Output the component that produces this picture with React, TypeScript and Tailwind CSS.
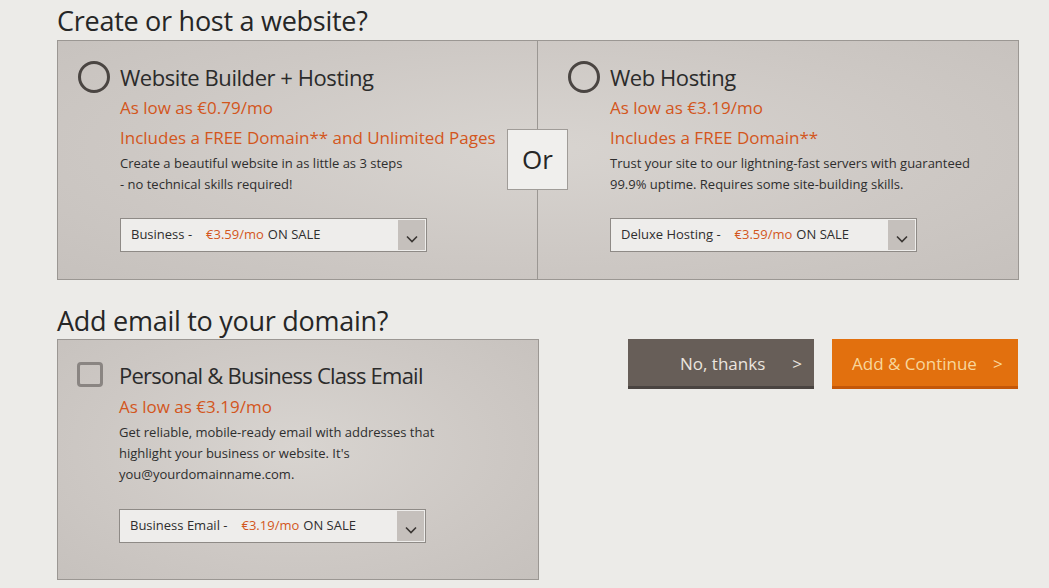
import React from 'react';

const font = { fontFamily: '"Open Sans", "Liberation Sans", sans-serif' };

const Radio: React.FC = () => (
  <div className="w-[32px] h-[32px] shrink-0 rounded-full border-[3px] border-[#4a4542]" />
);

const Checkbox: React.FC = () => (
  <div className="w-[26px] h-[25px] shrink-0 mt-[3px] mr-[16px] rounded-[4px] border-[3px] border-[#8a8582]" />
);

const Select: React.FC<{ label: string; price: string }> = ({ label, price }) => (
  <div className="w-[307px] h-[34px] flex items-stretch border border-[#8e8a86] bg-[#eeedeb]">
    <div className="flex-1 flex items-center pl-[10px] text-[13px] text-[#2e2e2e]">
      <span>{label} -</span>
      <span className="ml-[14px] text-[#d3561c]">{price}</span>
      <span className="ml-[4px]">ON SALE</span>
    </div>
    <div className="w-[27px] my-[1px] mr-[1px] bg-[#c5c0bc] flex items-end justify-center pb-[7px]">
      <svg width="12" height="8" viewBox="0 0 12 8" fill="none">
        <path d="M1 1.5 L6 6.5 L11 1.5" stroke="#3a3633" strokeWidth="1.6" />
      </svg>
    </div>
  </div>
);

const Option: React.FC<{
  title: string;
  price: string;
  includes: string;
  desc: string[];
  select: { label: string; price: string };
  pad: string;
}> = ({ title, price, includes, desc, select, pad }) => (
  <div className={`flex gap-[10px] ${pad} pt-[20px] pb-[27px]`}>
    <Radio />
    <div className="flex flex-col">
      <div className="h-[32px] leading-[32px] text-[22px] text-[#2b2b2b] tracking-[-0.02em]">{title}</div>
      <div className="h-[30px] leading-[30px] text-[17px] text-[#d3561c]">{price}</div>
      <div className="h-[30px] leading-[30px] text-[17px] text-[#d3561c]">{includes}</div>
      <div className="text-[13px] leading-[21px] text-[#2e2e2e]">
        {desc.map((d) => (
          <div key={d}>{d}</div>
        ))}
      </div>
      <div className="mt-[23px]">
        <Select {...select} />
      </div>
    </div>
  </div>
);

const panelBg =
  'bg-[radial-gradient(ellipse_at_50%_45%,#d8d4d0_0%,#cdc8c4_60%,#c6c1bd_100%)]';

export default function App() {
  return (
    <div style={font} className="w-[1049px] h-[588px] overflow-hidden bg-[#ecebe8] pl-[57px]">
      <h1 className="h-[40px] leading-[42px] text-[27px] text-[#262626] tracking-[-0.01em]">
        Create or host a website?
      </h1>

      <div className={`relative w-[962px] grid grid-cols-2 border border-[#9b9793] ${panelBg}`}>
        <div className="border-r border-[#9b9793]">
          <Option
            pad="pl-[20px]"
            title="Website Builder + Hosting"
            price="As low as €0.79/mo"
            includes="Includes a FREE Domain** and Unlimited Pages"
            desc={['Create a beautiful website in as little as 3 steps', '- no technical skills required!']}
            select={{ label: 'Business', price: '€3.59/mo' }}
          />
        </div>
        <div>
          <Option
            pad="pl-[30px]"
            title="Web Hosting"
            price="As low as €3.19/mo"
            includes="Includes a FREE Domain**"
            desc={[
              'Trust your site to our lightning-fast servers with guaranteed',
              '99.9% uptime. Requires some site-building skills.',
            ]}
            select={{ label: 'Deluxe Hosting', price: '€3.59/mo' }}
          />
        </div>
        <div className="absolute left-[449px] top-[88px] w-[61px] h-[61px] bg-[#f0efed] border border-[#a09c98] flex items-center justify-center text-[26px] text-[#262626]">
          Or
        </div>
      </div>

      <h2 className="mt-[20px] h-[39px] leading-[41px] text-[27px] text-[#262626] tracking-[-0.01em]">
        Add email to your domain?
      </h2>

      <div className="flex items-start">
        <div className={`w-[482px] h-[241px] border border-[#9b9793] ${panelBg}`}>
          <div className="flex pl-[19px] pt-[19px]">
            <Checkbox />
            <div className="flex flex-col">
              <div className="h-[32px] leading-[32px] text-[22px] text-[#2b2b2b] tracking-[-0.035em]">
                Personal &amp; Business Class Email
              </div>
              <div className="h-[31px] leading-[31px] text-[17px] text-[#d3561c]">As low as €3.19/mo</div>
              <div className="text-[13px] leading-[21px] text-[#2e2e2e]">
                <div>Get reliable, mobile-ready email with addresses that</div>
                <div>highlight your business or website. It's</div>
                <div>you@yourdomainname.com.</div>
              </div>
              <div className="mt-[24px]">
                <Select label="Business Email" price="€3.19/mo" />
              </div>
            </div>
          </div>
        </div>

        <div className="flex gap-[18px] ml-[89px]">
          <button className="w-[186px] h-[50px] bg-[#675e58] border-b-[3px] border-[#4a4441] flex items-center justify-end pt-[3px] pr-[12px] text-[17px] text-[#ebe5df]">
            <span>No, thanks</span>
            <span className="ml-[27px]">&gt;</span>
          </button>
          <button className="w-[186px] h-[50px] bg-[#e2700e] border-b-[3px] border-[#c45708] flex items-center pt-[3px] pl-[20px] text-[17px] text-[#f8d79c]">
            <span>Add &amp; Continue</span>
            <span className="ml-[16px]">&gt;</span>
          </button>
        </div>
      </div>
    </div>
  );
}
